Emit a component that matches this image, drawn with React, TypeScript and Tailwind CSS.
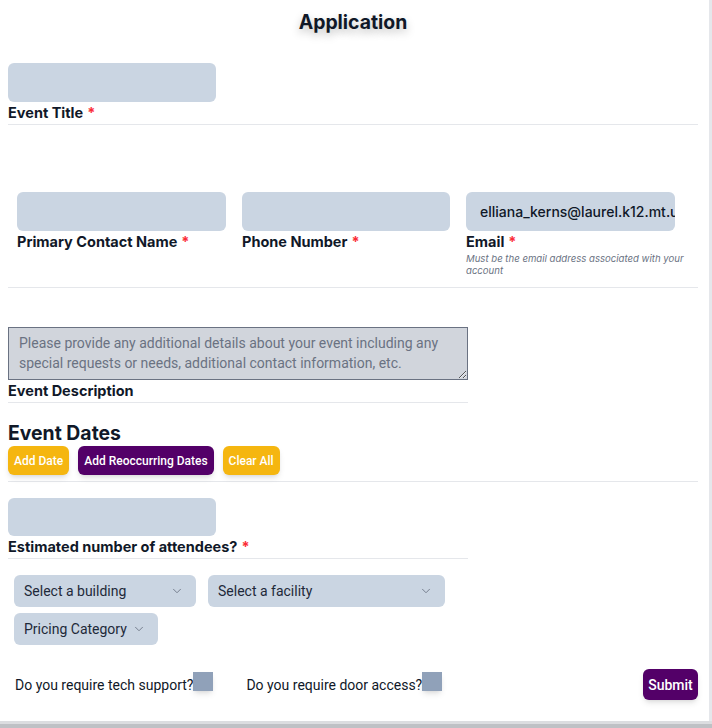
import { ChevronDown } from "lucide-react";

const font = { fontFamily: "Inter, 'Noto Sans', sans-serif" };
const roboto = "font-['Roboto',sans-serif]";

function Req() {
    return <span className="text-red-500 ml-1">*</span>;
}

function SelectBox({ label, width }: { label: string; width: string }) {
    return (
        <div className={`${width} h-8 bg-slate-300 rounded-md flex items-center justify-between pl-2.5 pr-3 text-sm text-gray-800 ${roboto}`}>
            <span>{label}</span>
            <ChevronDown className="w-3.5 h-3.5 text-gray-500" strokeWidth={1.5} />
        </div>
    );
}

export default function App() {
    return (
        <div className="h-[728px] flex flex-col bg-[#bfc1c5] overflow-hidden" style={font}>
            <div className="flex h-[721px] bg-[#e5e7eb]">
                <div className="w-[709px] bg-white pl-2 pr-[11px]">
                    <h1 className="text-center text-[19.4px] font-bold text-gray-900 leading-7 mt-2 [text-shadow:0_4px_8px_rgba(0,0,0,0.25)]">
                        Application
                    </h1>

                    {/* event title */}
                    <div className="mt-[27px] border-b border-gray-200 pb-px">
                        <div className="w-[208px] h-[39px] bg-slate-300 rounded-md" />
                        <label className="block text-[14.5px] font-bold leading-5 mt-px text-gray-900">
                            Event Title<Req />
                        </label>
                    </div>

                    {/* contact */}
                    <div className="mt-[67px] flex gap-4 pl-[9px] pb-[10px] border-b border-gray-200">
                        <div className="w-[209px]">
                            <div className="h-[39px] bg-slate-300 rounded-md" />
                            <label className="block text-[14.5px] font-bold leading-5 mt-px text-gray-900">
                                Primary Contact Name<Req />
                            </label>
                        </div>
                        <div className="w-[208px]">
                            <div className="h-[39px] bg-slate-300 rounded-md" />
                            <label className="block text-[14.5px] font-bold leading-5 mt-px text-gray-900">
                                Phone Number<Req />
                            </label>
                        </div>
                        <div className="flex-1">
                            <input
                                readOnly
                                value="elliana_kerns@laurel.k12.mt.us"
                                className="w-[209px] h-[39px] bg-slate-300 rounded-md pl-3.5 pr-0 text-sm font-medium text-gray-900 outline-none"
                            />
                            <label className="block text-[14.5px] font-bold leading-5 mt-px text-gray-900">
                                Email<Req />
                            </label>
                            <p className="text-[9.6px] italic leading-3 text-gray-500 mt-px">
                                Must be the email address associated with your account
                            </p>
                        </div>
                    </div>

                    {/* description */}
                    <div className="mt-[39px] w-[460px] border-b border-gray-200 pb-px">
                        <textarea
                            className={`block w-full h-[53px] bg-gray-300 border border-gray-500 px-2.5 pt-[5px] text-sm leading-5 text-gray-700 placeholder:text-gray-500 outline-none ${roboto}`}
                            placeholder="Please provide any additional details about your event including any special requests or needs, additional contact information, etc."
                        />
                        <label className="block text-[14.5px] font-bold leading-5 mt-px text-gray-900">
                            Event Description
                        </label>
                    </div>

                    {/* dates */}
                    <div className="mt-[18px] border-b border-gray-200 pb-[6px]">
                        <h2 className="text-[19.4px] font-bold leading-6 text-gray-900">Event Dates</h2>
                        <div className={`flex gap-[9px] mt-px ${roboto}`}>
                            <button className="h-[29px] px-1.5 rounded-md bg-[#f5b610] text-white text-xs font-medium shadow-md">
                                Add Date
                            </button>
                            <button className="h-[29px] px-1.5 rounded-md bg-[#530068] text-white text-xs font-medium shadow-md">
                                Add Reoccurring Dates
                            </button>
                            <button className="h-[29px] px-1.5 rounded-md bg-[#f5b610] text-white text-xs font-medium shadow-md">
                                Clear All
                            </button>
                        </div>
                    </div>

                    {/* attendees */}
                    <div className="mt-[16px] w-[460px] border-b border-gray-200 pb-px">
                        <div className="w-[208px] h-[38px] bg-slate-300 rounded-md" />
                        <label className="block text-[14.5px] font-bold leading-5 mt-px text-gray-900">
                            Estimated number of attendees?<Req />
                        </label>
                    </div>

                    {/* selects */}
                    <div className="mt-[16px] pl-1.5 flex flex-col gap-1.5">
                        <div className="flex gap-3">
                            <SelectBox label="Select a building" width="w-[182px]" />
                            <SelectBox label="Select a facility" width="w-[237px]" />
                        </div>
                        <SelectBox label="Pricing Category" width="w-[144px]" />
                    </div>

                    {/* bottom row */}
                    <div className="mt-[24px] flex items-start justify-between">
                        <div className={`flex items-start pl-[7px] pt-[3px] text-sm leading-5 text-gray-900 ${roboto}`}>
                            <span className="pt-[3px]">Do you require tech support?</span>
                            <input type="checkbox" className="appearance-none w-5 h-[19px] bg-slate-400 shadow-md" />
                            <span className="pt-[3px] ml-[33px]">Do you require door access?</span>
                            <input type="checkbox" className="appearance-none w-5 h-[19px] bg-slate-400 shadow-md" />
                        </div>
                        <button className={`h-[31px] w-[55px] rounded-md bg-[#530068] text-white text-sm font-medium shadow-md ${roboto}`}>
                            Submit
                        </button>
                    </div>
                </div>
            </div>
            <div className="h-[3px] bg-[#dcdde0]" />
        </div>
    );
}
